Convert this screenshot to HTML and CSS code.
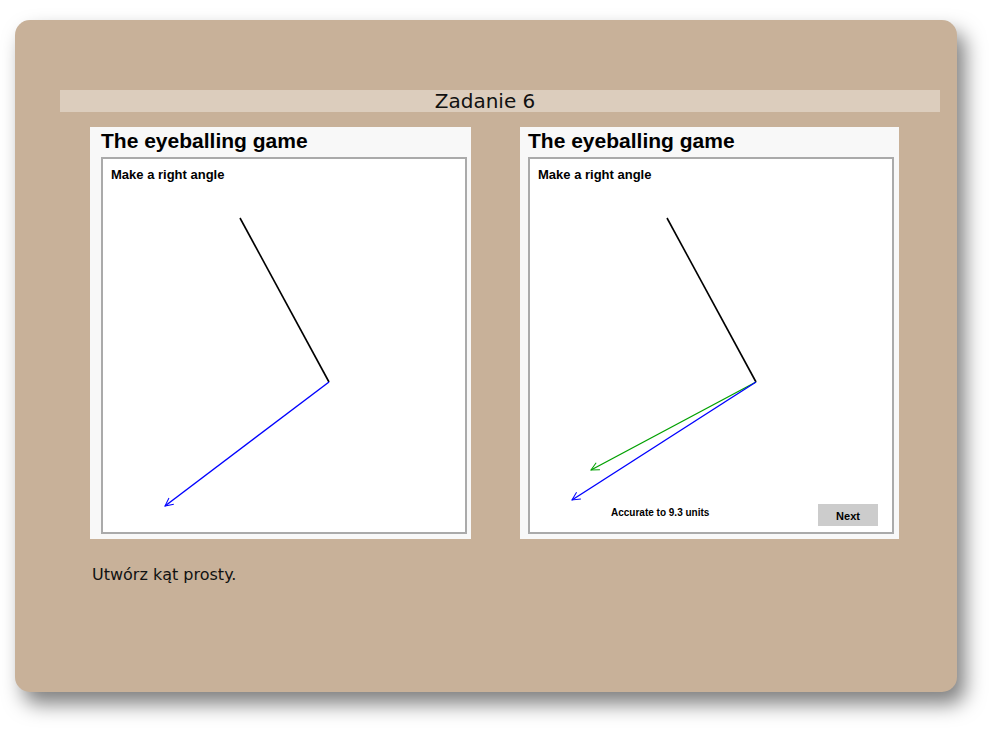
FILE: index.html
```html
<!DOCTYPE html>
<html lang="pl">
<head>
  <meta charset="UTF-8">
  <title>Zadanie 6</title>
  <link rel="stylesheet" href="styles.css">
</head>
<body>
  <div class="card">
    <div class="bar">Zadanie 6</div>

    <div class="panels">
      <div class="panel">
        <h2>The eyeballing game</h2>
        <div class="board">
          <p class="task">Make a right angle</p>
          <svg class="canvas" width="362" height="373" viewBox="0 0 362 373">
            <defs>
              <marker id="headBlue" markerWidth="10" markerHeight="10" refX="9" refY="5" orient="auto" markerUnits="userSpaceOnUse">
                <path d="M1,1 L9,5 L1,9" fill="none" stroke="#0000ff" stroke-width="1"/>
              </marker>
            </defs>
            <line x1="137" y1="59" x2="226" y2="223" stroke="#000" stroke-width="1.6"/>
            <line x1="226" y1="223" x2="62" y2="347" stroke="#0000ff" stroke-width="1.4" marker-end="url(#headBlue)"/>
          </svg>
        </div>
      </div>

      <div class="panel">
        <h2>The eyeballing game</h2>
        <div class="board">
          <p class="task">Make a right angle</p>
          <svg class="canvas" width="362" height="373" viewBox="0 0 362 373">
            <defs>
              <marker id="headBlue2" markerWidth="10" markerHeight="10" refX="9" refY="5" orient="auto" markerUnits="userSpaceOnUse">
                <path d="M1,1 L9,5 L1,9" fill="none" stroke="#0000ff" stroke-width="1"/>
              </marker>
              <marker id="headGreen" markerWidth="10" markerHeight="10" refX="9" refY="5" orient="auto" markerUnits="userSpaceOnUse">
                <path d="M1,1 L9,5 L1,9" fill="none" stroke="#00a000" stroke-width="1"/>
              </marker>
            </defs>
            <line x1="137" y1="59" x2="226" y2="223" stroke="#000" stroke-width="1.6"/>
            <line x1="226" y1="223" x2="61" y2="311" stroke="#00a000" stroke-width="1.4" marker-end="url(#headGreen)"/>
            <line x1="226" y1="223" x2="42" y2="341" stroke="#0000ff" stroke-width="1.4" marker-end="url(#headBlue2)"/>
          </svg>
          <div class="result">
            <span class="score">Accurate to 9.3 units</span>
            <button class="next">Next</button>
          </div>
        </div>
      </div>
    </div>

    <p class="prompt">Utwórz kąt prosty.</p>
  </div>
</body>
</html>
```

FILE: styles.css
```css
* {
  margin: 0;
  padding: 0;
  box-sizing: border-box;
}
html, body {
  height: 100%;
}
body {
  background: #fff;
  font-family: "DejaVu Sans", Verdana, sans-serif;
  padding-top: 20px;
}
.card {
  margin-left: 15px;
  width: 942px;
  height: 672px;
  background: #c8b199;
  border-radius: 15px;
  padding: 70px 17px 0 45px;
  box-shadow: 8px 12px 20px rgba(0,0,0,0.5);
}
.bar {
  height: 22px;
  line-height: 22px;
  background: #dccdbd;
  text-align: center;
  padding-right: 30px;
  font-size: 20px;
  color: #111;
}
.panels {
  display: flex;
  gap: 49px;
  margin-top: 15px;
  padding-left: 30px;
}
.panel {
  width: 381px;
  background: #f8f8f8;
  padding: 0 4px 5px 11px;
  font-family: "Liberation Sans", Arial, sans-serif;
}
.panel + .panel {
  width: 379px;
  padding-left: 8px;
}
.panel h2 {
  height: 30px;
  line-height: 28px;
  font-size: 21px;
  font-weight: bold;
  color: #000;
}
.board {
  position: relative;
  width: 366px;
  height: 377px;
  background: #fff;
  border: 2px solid #aaa;
  display: flex;
  flex-direction: column;
}
.task {
  padding: 8px 0 0 8px;
  font-size: 13px;
  line-height: 15px;
  font-weight: bold;
}
.canvas {
  position: absolute;
  left: 0;
  top: 0;
}
.result {
  margin-top: auto;
  display: flex;
  align-items: center;
  justify-content: space-between;
  padding: 0 14px 6px 81px;
}
.score {
  font-size: 10px;
  font-weight: bold;
  margin-top: -6px;
}
.next {
  width: 60px;
  height: 22px;
  border: none;
  background: #cccccc;
  font-family: "Liberation Sans", Arial, sans-serif;
  font-size: 11px;
  font-weight: bold;
  padding-top: 2px;
}
.prompt {
  margin-top: 26px;
  padding-left: 32px;
  font-size: 16px;
  line-height: 19px;
  color: #111;
}
```
